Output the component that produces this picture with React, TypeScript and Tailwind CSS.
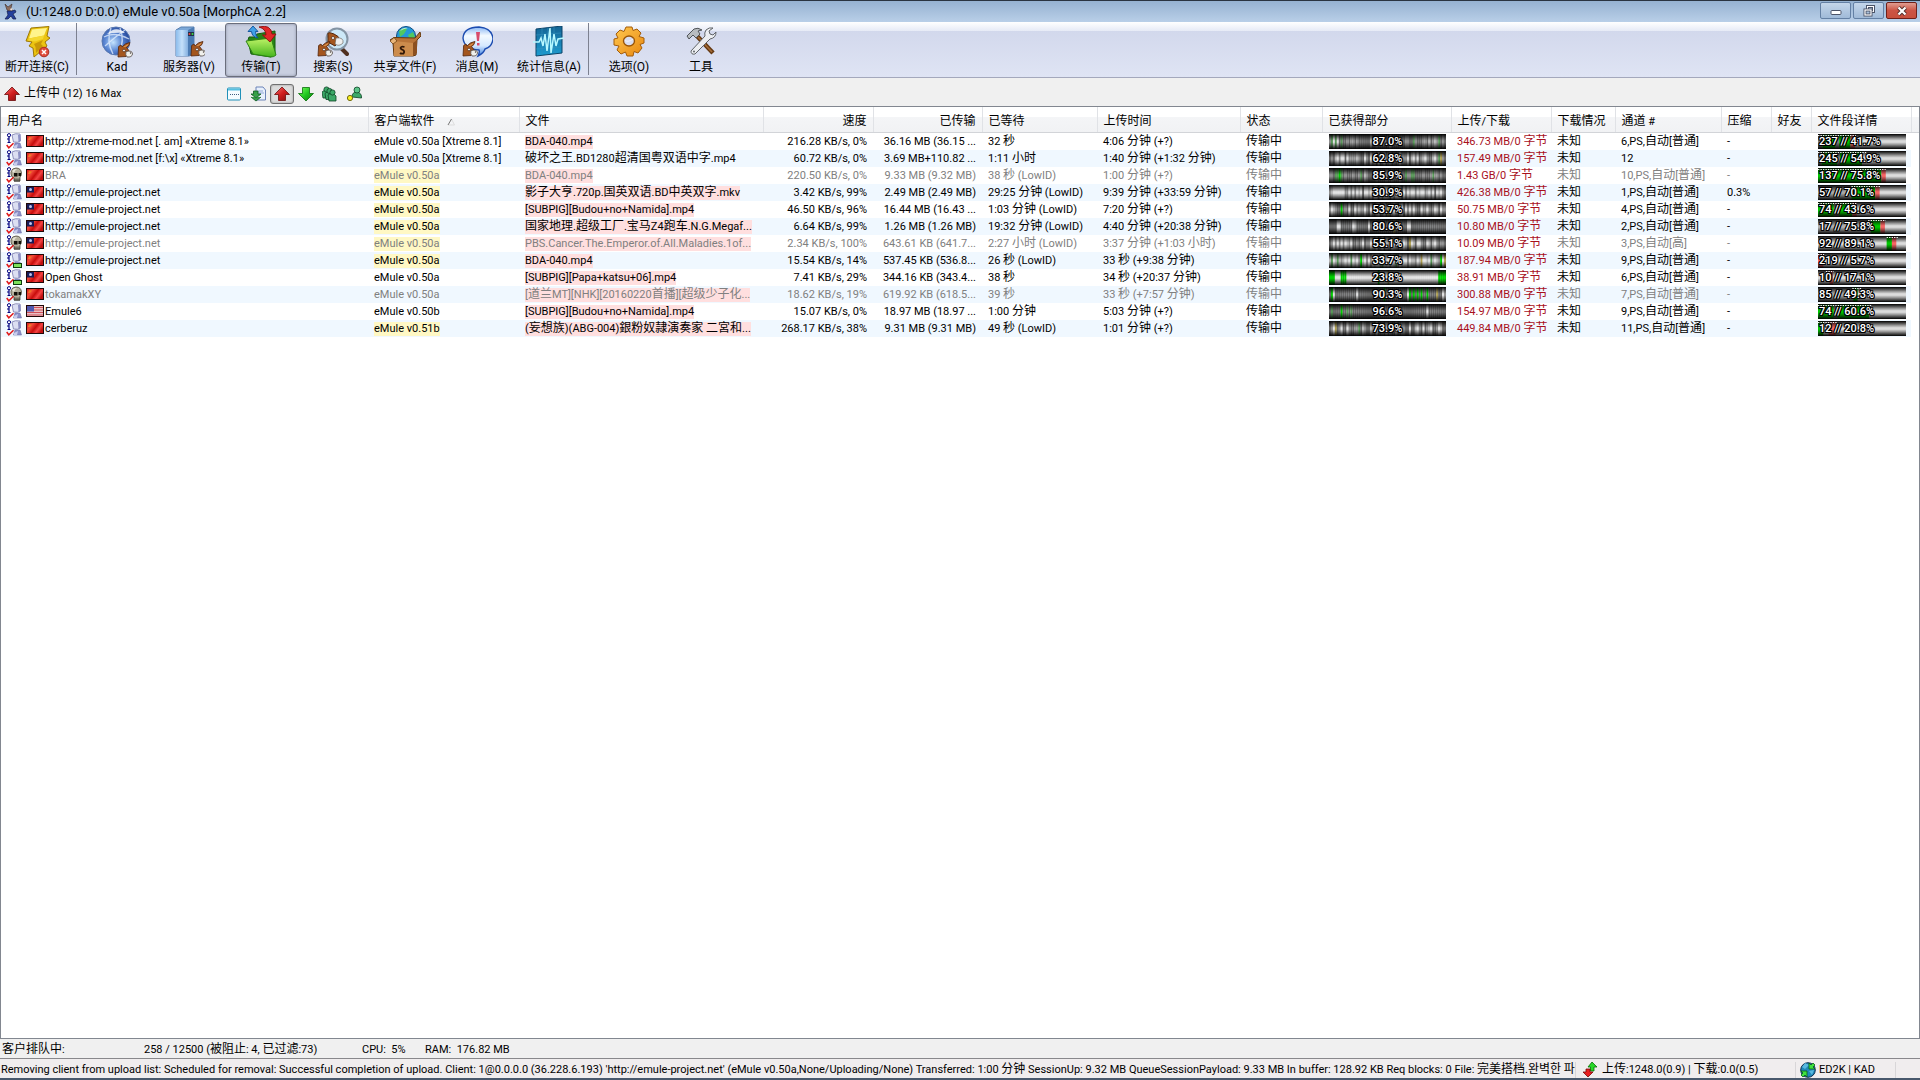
import type { ReactNode } from 'react';
import clsx from 'clsx';

type Client = {
  name: string;
  flag: 'cn' | 'tw' | 'us';
  icon: 'friend' | 'skull' | 'green';
  soft: string;
  softMark?: boolean;
  file: string;
  fileMark?: boolean;
  speed: string;
  sent: string;
  waited: string;
  upTime: string;
  parts: string;
  percent: string;
  total: string;
  slot: string;
  zip: string;
  chunk: string;
  // [start, end, colour] in percent of the bar
  bands: [number, number, string][];
  dots: [number, number];
  dim?: boolean;
};

const GREEN = '#00c800';
const RED = '#f86464';
const SHADE = '#808080';

const clients: Client[] = [
  {
    name: 'http://xtreme-mod.net [. am] «Xtreme 8.1»', flag: 'cn', icon: 'friend',
    soft: 'eMule v0.50a [Xtreme 8.1]', file: 'BDA-040.mp4', fileMark: true,
    speed: '216.28 KB/s, 0%', sent: '36.16 MB (36.15 ...', waited: '32 秒', upTime: '4:06 分钟 (+?)',
    parts: 'mgwgwdgddmdmmdmddddddlddmddddkdldddddddmmddgmdddmmdldmlmgdmd', percent: '87.0%',
    total: '346.73 MB/0 字节', slot: '6,PS,自动[普通]', zip: '-', chunk: '237 // 41.7%',
    bands: [[0, 5, SHADE], [5, 20, GREEN], [20, 24, SHADE], [24, 37, GREEN], [37, 42, RED]], dots: [0, 43],
  },
  {
    name: 'http://xtreme-mod.net [f:\\x] «Xtreme 8.1»', flag: 'cn', icon: 'friend',
    soft: 'eMule v0.50a [Xtreme 8.1]', file: '破坏之王.BD1280超清国粤双语中字.mp4',
    speed: '60.72 KB/s, 0%', sent: '3.69 MB+110.82 ...', waited: '1:11 小时', upTime: '1:40 分钟 (+1:32 分钟)',
    parts: 'dmdlwmwwdwmmmmlmddwmdwmldwdmwdmldmdmwmmmwdlwmwdmlwmddlwmgymd', percent: '62.8%',
    total: '157.49 MB/0 字节', slot: '12', zip: '-', chunk: '245 // 54.9%',
    bands: [[0, 4, SHADE], [4, 22, GREEN], [22, 25, SHADE], [25, 50, GREEN]], dots: [0, 55],
  },
  {
    name: 'BRA', flag: 'cn', icon: 'skull', soft: 'eMule v0.50a', softMark: true, file: 'BDA-040.mp4', fileMark: true,
    speed: '220.50 KB/s, 0%', sent: '9.33 MB (9.32 MB)', waited: '38 秒 (LowID)', upTime: '1:00 分钟 (+?)',
    parts: 'mmdggGgdmdddmddmgdlmddddmddddmddmdddmddgmmggddddmdddmgmmdmdd', percent: '85.9%',
    total: '1.43 GB/0 字节', slot: '10,PS,自动[普通]', zip: '-', chunk: '137 // 75.8%',
    bands: [[0, 72, GREEN], [72, 77, RED]], dots: [0, 77], dim: true,
  },
  {
    name: 'http://emule-project.net', flag: 'tw', icon: 'friend', soft: 'eMule v0.50a', softMark: true,
    file: '影子大亨.720p.国英双语.BD中英双字.mkv', fileMark: true,
    speed: '3.42 KB/s, 99%', sent: '2.49 MB (2.49 MB)', waited: '29:25 分钟 (LowID)', upTime: '9:39 分钟 (+33:59 分钟)',
    parts: 'mlwwwwwwmmwmwmwlwdwwlwmwwdwmwwldwmwwldwmwlwwmwlwwmlwmwdwlwmd', percent: '30.9%',
    total: '426.38 MB/0 字节', slot: '1,PS,自动[普通]', zip: '0.3%', chunk: '57 // 70.1%',
    bands: [[0, 38, '#a8a8a8'], [38, 65, GREEN], [65, 70, RED]], dots: [38, 71],
  },
  {
    name: 'http://emule-project.net', flag: 'tw', icon: 'friend', soft: 'eMule v0.50a', softMark: true,
    file: '[SUBPIG][Budou+no+Namida].mp4', fileMark: true,
    speed: '46.50 KB/s, 96%', sent: '16.44 MB (16.43 ...', waited: '1:03 分钟 (LowID)', upTime: '7:20 分钟 (+?)',
    parts: 'mwlmddGdmdwddwmlmmwmdwmdlwdmwdydlwmdlwdwmwmwmddwmmwmdmwldwmm', percent: '53.7%',
    total: '50.75 MB/0 字节', slot: '4,PS,自动[普通]', zip: '-', chunk: '74 // 43.6%',
    bands: [[0, 18, GREEN], [18, 24, SHADE], [24, 39, GREEN], [39, 44, RED]], dots: [0, 44],
  },
  {
    name: 'http://emule-project.net', flag: 'tw', icon: 'friend', soft: 'eMule v0.50a', softMark: true,
    file: '国家地理.超级工厂.宝马Z4跑车.N.G.Megaf...', fileMark: true,
    speed: '6.64 KB/s, 99%', sent: '1.26 MB (1.26 MB)', waited: '19:32 分钟 (LowID)', upTime: '4:40 分钟 (+20:38 分钟)',
    parts: 'ddddwwddddddwlddddddwddddddddddddyddddddwwdddddddddddddddddd', percent: '80.6%',
    total: '10.80 MB/0 字节', slot: '2,PS,自动[普通]', zip: '-', chunk: '17 // 75.8%',
    bands: [[0, 60, '#b0b0b0'], [60, 71, GREEN], [71, 76, RED]], dots: [57, 77],
  },
  {
    name: 'http://emule-project.net', flag: 'tw', icon: 'skull', soft: 'eMule v0.50a', softMark: true,
    file: 'PBS.Cancer.The.Emperor.of.All.Maladies.1of...', fileMark: true,
    speed: '2.34 KB/s, 100%', sent: '643.61 KB (641.7...', waited: '2:27 小时 (LowID)', upTime: '3:37 分钟 (+1:03 小时)',
    parts: 'dmwmwmwmwlmwddmdmwdmmwlmwdmwdlmdwlmdmmwldywldwwmddwldlwmdmmd', percent: '55.1%',
    total: '10.09 MB/0 字节', slot: '3,PS,自动[高]', zip: '-', chunk: '92 // 89.1%',
    bands: [[78, 84, GREEN], [84, 89, RED]], dots: [78, 91], dim: true,
  },
  {
    name: 'http://emule-project.net', flag: 'cn', icon: 'green', soft: 'eMule v0.50a', softMark: true,
    file: 'BDA-040.mp4', fileMark: true,
    speed: '15.54 KB/s, 14%', sent: '537.45 KB (536.8...', waited: '26 秒 (LowID)', upTime: '33 秒 (+9:38 分钟)',
    parts: 'lgwlglmlwlwgwlwmGlwmwmwlwwmgwlwmwlgmwlwwmwllmwlywwlwglwlmGwy', percent: '33.7%',
    total: '187.94 MB/0 字节', slot: '9,PS,自动[普通]', zip: '-', chunk: '219 // 5.7%',
    bands: [[0, 6, RED]], dots: [0, 7],
  },
  {
    name: 'Open Ghost', flag: 'tw', icon: 'green', soft: 'eMule v0.50a',
    file: '[SUBPIG][Papa+katsu+06].mp4', fileMark: true,
    speed: '7.41 KB/s, 29%', sent: '344.16 KB (343.4...', waited: '38 秒', upTime: '34 秒 (+20:37 分钟)',
    parts: 'GGGwwwGGGwwwwwwwwwwwwwwwwGwwwwywwwwwwwwwwwwwwwwwwwwwwwwwGGGG', percent: '23.8%',
    total: '38.91 MB/0 字节', slot: '6,PS,自动[普通]', zip: '-', chunk: '10 // 17.1%',
    bands: [[13, 17, RED]], dots: [9, 18],
  },
  {
    name: 'tokamakXY', flag: 'cn', icon: 'skull', soft: 'eMule v0.50a',
    file: '[道兰MT][NHK][20160220首播][超级少子化...', fileMark: true,
    speed: '18.62 KB/s, 19%', sent: '619.92 KB (618.5...', waited: '39 秒', upTime: '33 秒 (+7:57 分钟)',
    parts: 'dGwdddddddddddwdddddddddddddGdddddddddddwGdGdGdGddGddddyddwm', percent: '90.3%',
    total: '300.88 MB/0 字节', slot: '7,PS,自动[普通]', zip: '-', chunk: '85 // 49.3%',
    bands: [[0, 40, '#a8a8a8'], [40, 45, GREEN]], dots: [39, 50], dim: true,
  },
  {
    name: 'Emule6', flag: 'us', icon: 'friend', soft: 'eMule v0.50b',
    file: '[SUBPIG][Budou+no+Namida].mp4', fileMark: true,
    speed: '15.07 KB/s, 0%', sent: '18.97 MB (18.97 ...', waited: '1:00 分钟', upTime: '5:03 分钟 (+?)',
    parts: 'dgddddGddgdgddddddddddddddddddddddddddddddddddddddwddddddddd', percent: '96.6%',
    total: '154.97 MB/0 字节', slot: '9,PS,自动[普通]', zip: '-', chunk: '74 // 60.6%',
    bands: [[0, 18, GREEN], [18, 22, SHADE], [22, 58, GREEN]], dots: [0, 61],
  },
  {
    name: 'cerberuz', flag: 'cn', icon: 'friend', soft: 'eMule v0.51b', softMark: true,
    file: '(妄想族)(ABG-004)銀粉奴隷演奏家 二宮和...', fileMark: true,
    speed: '268.17 KB/s, 38%', sent: '9.31 MB (9.31 MB)', waited: '49 秒 (LowID)', upTime: '1:01 分钟 (+?)',
    parts: 'dmwydmwddwmddmmgdlmddlmdwddmdldmddlddmmddwddlwmdwdmlwddmwldd', percent: '73.9%',
    total: '449.84 MB/0 字节', slot: '11,PS,自动[普通]', zip: '-', chunk: '12 // 20.8%',
    bands: [[0, 6, GREEN], [12, 20, RED]], dots: [0, 22],
  },
];

const tones: Record<string, string> = {
  k: '#484848', d: '#686868', m: '#909090', l: '#b8b8b8', w: '#e2e2e2', g: '#5a9a5a', G: '#00d000', y: '#b0a050',
};

const columns: { label: string; width: string; right?: boolean }[] = [
  { label: '用户名', width: 'w-[367px]' },
  { label: '客户端软件', width: 'w-[151px]' },
  { label: '文件', width: 'w-[244px]' },
  { label: '速度', width: 'w-[110px]', right: true },
  { label: '已传输', width: 'w-[109px]', right: true },
  { label: '已等待', width: 'w-[115px]' },
  { label: '上传时间', width: 'w-[143px]' },
  { label: '状态', width: 'w-[82px]' },
  { label: '已获得部分', width: 'w-[129px]' },
  { label: '上传/下载', width: 'w-[100px]' },
  { label: '下载情况', width: 'w-[64px]' },
  { label: '通道 #', width: 'w-[106px]' },
  { label: '压缩', width: 'w-[50px]' },
  { label: '好友', width: 'w-[40px]' },
  { label: '文件段详情', width: 'w-[100px]' },
];

// Ideographs are set one pixel larger than the latin text around them
function Mixed({ text }: { text: string }) {
  const pieces = text.split(/([\u3000-\u30ff\u4e00-\u9fff\uac00-\ud7af]+)/);
  return (
    <span>
      {pieces.map((piece, i) => (i % 2 ? <span key={i} className="text-xs leading-none">{piece}</span> : piece))}
    </span>
  );
}

const outline = 'font-medium [text-shadow:1px_0_#000,-1px_0_#000,0_1px_#000,0_-1px_#000,1px_1px_#000,-1px_-1px_#000,1px_-1px_#000,-1px_1px_#000]';
const tube = 'bg-[linear-gradient(#000_0,rgba(0,0,0,.3)_30%,transparent_45%,transparent_55%,rgba(0,0,0,.3)_70%,#000_100%)]';

function PartsBar({ parts, percent }: { parts: string; percent: string }) {
  return (
    <div className="relative h-[15px]">
      <svg className="block w-full h-full" viewBox={`0 0 ${parts.length} 1`} preserveAspectRatio="none">
        {parts.split('').map((c, i) => (
          <rect key={i} x={i} y="0" width="1.05" height="1" fill={tones[c]} />
        ))}
      </svg>
      <div className={clsx('absolute inset-0 text-center leading-[15px] text-white', tube)}>
        <span className={outline}>{percent}</span>
      </div>
    </div>
  );
}

function ChunkBar({ chunk, bands, dots }: { chunk: string; bands: Client['bands']; dots: [number, number] }) {
  return (
    <div className="relative h-[15px]">
      <svg className="block w-full h-full" viewBox="0 0 100 15" preserveAspectRatio="none">
        <rect width="100" height="15" fill="#dcdcdc" />
        {bands.map(([from, to, fill]) => (
          <rect key={from} x={from} width={to - from} height="15" fill={fill} />
        ))}
      </svg>
      <div className={clsx('absolute inset-0 text-white', tube)}>
        <svg className="absolute inset-0 w-full h-full" viewBox="0 0 100 15" preserveAspectRatio="none">
          <path d={`M${dots[0]} 1.5H${dots[1]}`} stroke="#fff" strokeDasharray="1.6 1.2" />
        </svg>
        <span className={clsx('relative block pl-px leading-[15px]', outline)}>{chunk}</span>
      </div>
    </div>
  );
}

function ClientIcon({ kind }: { kind: Client['icon'] }) {
  return (
    <svg className="w-4 h-4 shrink-0" viewBox="0 0 16 16">
      {kind === 'skull' ? (
        <>
          <path d="M5 5Q6 1 10 1Q15 1 15.500 6Q15.500 9 14 10V14H8V11Q5 10 5 7Z" fill="#b4b09c" stroke="#4c483c" strokeWidth=".8" />
          <path d="M6 4Q8 1.500 11 2Q9 3 8 6Z" fill="#e8e6d8" />
          <path d="M8 6H11.500V9.500H8ZM12.500 6H15V9H12.500Z" fill="#14120c" />
          <path d="M9 11.500V15M11 11.500V15M13 11.500V15" stroke="#28261e" strokeWidth=".9" />
        </>
      ) : (
        <>
          <path d="M6 2Q9 0 14 1L14.500 8Q12 10 7.500 9Z" fill="#dcdff2" stroke="#8486b4" strokeWidth=".9" />
          <path d="M12 2L14.500 1.500V8L12.500 9Z" fill="#8c90c4" />
          <path d="M9 10H14L15.500 15H7.500Z" fill="#8c90c8" stroke="#7074a8" strokeWidth=".6" />
          <path d="M8 13L12 11L11 15H8Z" fill="#c8ccec" />
        </>
      )}
      <circle cx="3" cy="2.200" r="1.600" fill="#fff" stroke="#000080" />
      <path d="M3 4V10M1 6H3M1.500 9.500H4.500" stroke="#000080" strokeWidth="1.200" fill="none" />
      <path d="M.7 12L2.800 14.800L7.500 10.300" stroke="#e01818" strokeWidth="1.500" fill="none" />
      {kind === 'green' && <rect x="7.500" y="11.500" width="8" height="4" fill="#7ce05a" stroke="#0c3c0c" />}
    </svg>
  );
}

function Flag({ country }: { country: Client['flag'] }) {
  return (
    <svg className="ml-1 mr-px w-[18px] h-3 shrink-0" viewBox="0 0 18 12">
      <defs>
        <linearGradient id={`wave-${country}`} x1="0" y1="0" x2="1" y2=".5">
          <stop offset="0" stopColor="#d81818" />
          <stop offset=".35" stopColor="#f04838" />
          <stop offset=".6" stopColor="#c80c0c" />
          <stop offset=".8" stopColor="#f44444" />
          <stop offset="1" stopColor="#c01010" />
        </linearGradient>
      </defs>
      <rect x=".5" y=".5" width="17" height="11" fill={country === 'us' ? '#e8c0c4' : `url(#wave-${country})`} stroke="#200808" />
      {country === 'cn' && <path d="M2 5L3 2L6 2.500L4 5Z" fill="#f07828" />}
      {country === 'tw' && (
        <>
          <path d="M1 1H8V6.500H1Z" fill="#181c58" />
          <circle cx="4.500" cy="3.500" r="1.500" fill="#c0c4ec" />
        </>
      )}
      {country === 'us' && (
        <>
          <path d="M1 2.500H17M1 5H17M1 7.500H17M1 10H17" stroke="#d05058" />
          <path d="M1 1H8V6.500H1Z" fill="#5058b0" />
        </>
      )}
    </svg>
  );
}

function ArrowIcon({ up, className }: { up?: boolean; className?: string }) {
  return (
    <svg className={clsx('w-4 h-4', className)} viewBox="0 0 16 16">
      <defs>
        <linearGradient id={up ? 'arrow-up' : 'arrow-down'} x1="0" y1="0" x2="1" y2="1">
          <stop offset="0" stopColor={up ? '#f47070' : '#80ff60'} />
          <stop offset=".5" stopColor={up ? '#d01c1c' : '#20c820'} />
          <stop offset="1" stopColor={up ? '#800c0c' : '#087808'} />
        </linearGradient>
      </defs>
      {up ? (
        <path d="M8 1L15.500 8.500H11.500V14.500H4.500V8.500H.5Z" fill="url(#arrow-up)" stroke="#6e0a0a" strokeWidth=".8" />
      ) : (
        <path d="M8 15L15.500 7.500H11.500V1.500H4.500V7.500H.5Z" fill="url(#arrow-down)" stroke="#0a6e0a" strokeWidth=".8" />
      )}
    </svg>
  );
}

// Donkey head, about 15 units wide, drawn from its own origin
function Donkey({ x, y }: { x: number; y: number }) {
  return (
    <g transform={`translate(${x} ${y})`}>
      <path d="M1 15L1.500 7Q.5 4 4 3L5 5Q8 1 13 .5Q12.500 4 9.500 5.500Q11 7 12 9L9 14.500Z" fill="#a4561e" stroke="#54260c" strokeWidth=".8" />
      <path d="M6 5L12 1.500Q11 4 8 5Z" fill="#e09850" />
      <path d="M9 9.500Q15.500 8 15.500 12Q15 15.500 10 15Q8 13 9 9.500Z" fill="#f0f0ec" stroke="#504844" strokeWidth=".8" />
      <circle cx="7" cy="8.500" r="1.300" fill="#fff" stroke="#301408" strokeWidth=".6" />
      <circle cx="13.500" cy="11" r=".7" fill="#403838" />
    </g>
  );
}

const icons: Record<string, ReactNode> = {
  disconnect: (
    <>
      <path d="M10 2L28 .5L26 10L29 12L24 16L26 20L13 31L12 22L8 20L11 16L5 15Z" fill="#ecc410" stroke="#9c7808" />
      <path d="M11 3.500L26 2L23 9.500L8 12.500Z" fill="#fff48c" />
      <path d="M8 12.500L23 9.500L22 13L14 15.500L7 14.500Z" fill="#f4d830" />
      <path d="M13 18L22 14L20 18L22 20L15 27L14.500 21Z" fill="#c89808" />
      <circle cx="23" cy="26" r="4.800" fill="#e04c3c" stroke="#a82c20" />
      <path d="M21 24L25 28M25 24L21 28" stroke="#fff" strokeWidth="1.500" />
    </>
  ),
  kad: (
    <>
      <circle cx="15" cy="15" r="14" fill="url(#tb-globe)" stroke="#5878b0" />
      <path d="M3 11Q13 5 28 13M4 20Q14 11 24 4M10 2Q5 15 12 28M19 2Q24 14 18 28" stroke="#e4f0ff" strokeWidth="1.400" fill="none" opacity=".75" />
      <path d="M6 8Q15 -1 24 7Q15 6 6 8Z" fill="#fff" opacity=".8" />
      <Donkey x={16} y={16} />
    </>
  ),
  server: (
    <>
      <path d="M3 4L8 1H21V28L16 30H3Z" fill="#7ca8d8" stroke="#5880b0" />
      <path d="M3 4H15V30H3Z" fill="url(#tb-case)" />
      <path d="M15 4L21 1V28L15 30Z" fill="#4c7cb4" />
      <rect x="15" y="6" width="6" height="4" fill="#203048" />
      <circle cx="16.500" cy="8" r="1" fill="#f04040" />
      <circle cx="19.500" cy="8" r="1" fill="#40e040" />
      <Donkey x={17} y={15} />
    </>
  ),
  transfer: (
    <>
      <path d="M3 14L4 11L10 11L12 8L30 5V27L26 31L6 28Z" fill="#288418" stroke="#145c0c" />
      <path d="M1 15L26 12L31 29Q29 31 26 31L8 28Z" fill="url(#tb-folder)" stroke="#2c8414" />
      <path d="M8 0L13 5.500H10.500Q10.500 10 13 12Q7 11 6.500 5.500H3Z" fill="#40a0e8" stroke="#0c5098" strokeWidth=".9" />
      <path d="M14 1Q26 -2 27 8H31L25 16L17.500 9H21Q21 3 14 1Z" fill="#e02828" stroke="#8c0c0c" strokeWidth=".9" />
    </>
  ),
  search: (
    <>
      <path d="M22 20L30 28" stroke="#503020" strokeWidth="4" strokeLinecap="round" />
      <circle cx="20" cy="13" r="10.500" fill="#cce8f8" stroke="#8494a4" strokeWidth="2" />
      <path d="M11 16L11 9Q10 6 14 7L17 8Q22 10 23 14L18 20Z" fill="#a4561e" stroke="#54260c" />
      <path d="M19 12Q27 11 26 17Q22 21 18 18Z" fill="#eee" stroke="#605850" strokeWidth=".6" />
      <circle cx="16" cy="12" r="1.500" fill="#fff" stroke="#301408" strokeWidth=".6" />
      <Donkey x={0} y={15} />
    </>
  ),
  shared: (
    <>
      <circle cx="17" cy="10" r="9.500" fill="#2498d8" stroke="#104c80" />
      <path d="M10 5Q14 1 18 3L15 8L11 11ZM19 9L24 6L26 11L21 14Z" fill="#50c860" />
      <path d="M11 5Q14 1 19 2Q14 3 11 5Z" fill="#fff" opacity=".7" />
      <path d="M1 14L5 11.500L26 12L31 6L32 10L28 14L27 29L24 30H5L4 17Z" fill="#b87438" stroke="#64380c" />
      <path d="M5 15L24 17V30H5Z" fill="#cc8c4c" />
      <path d="M24 17L28 14V27L24 30Z" fill="#8c5020" />
      <path d="M1 15L5 11.500L8 15L4 18Z" fill="#e8b478" stroke="#64380c" strokeWidth=".7" />
      <path d="M15.500 21Q12 20 11.500 22Q12 23.500 14 24Q16 25.500 14.500 27.500Q12 28 11 27" stroke="#301808" strokeWidth="1.800" fill="none" />
    </>
  ),
  messages: (
    <>
      <path d="M18 1Q31 2 32 13Q31 21 24 23Q23 27 17 30Q19 26 18 24Q3 23 2 12Q3 1 18 1Z" fill="url(#tb-bubble)" stroke="#1c4cb0" strokeWidth="1.400" />
      <path d="M15 6H19L18 15H16ZM16 17H18.500V19.500H16Z" fill="#d84c6c" />
      <Donkey x={1} y={15} />
    </>
  ),
  stats: (
    <>
      <path d="M3 3L29 0V27L3 30Z" fill="url(#tb-stats)" stroke="#0c4468" />
      <path d="M9 2V29M15 1.500V28M21 1V27M3 9L28 7M3 16L28 14M3 23L28 21" stroke="#3890bc" strokeWidth=".6" />
      <path d="M0 16H6L8 12L10 20L12 8L14 25L17 2L18 27L21 8L23 20L25 13L31 12" stroke="#b8f8ff" strokeWidth="1.500" fill="none" />
    </>
  ),
  options: (
    <>
      <path
        d="M13 1L19 1L20 4.500L24 3L28 7L26 10.500L31 12V17L27 18.500L29 22L25 27L21 25.500L20 30H14L12.500 26L8 28L4 24L6 20L1 19V13L5 12L3 8L7 4L11 5.500Z"
        fill="url(#tb-gear)"
        stroke="#a45c08"
        strokeLinejoin="round"
      />
      <ellipse cx="16" cy="15" rx="5.500" ry="5" fill="#d8ddf0" stroke="#985408" strokeWidth="1.400" />
      <path d="M11.500 14Q14 17 20.500 13" stroke="#fff" fill="none" opacity=".6" />
    </>
  ),
  tools: (
    <>
      <path d="M12 10L28 27" stroke="#643810" strokeWidth="4.500" />
      <path d="M13 11L27 26" stroke="#a46c38" strokeWidth="1.800" />
      <path d="M2 10L9 3Q13 1 17 4L13 5L15 8L11 12L8 9L4 13Z" fill="#b8bcc0" stroke="#505458" />
      <path d="M21 4Q24 1 28 2L24 5L25 8L28 9L31 6Q31 12 25 13L10 28Q6 29 6 25L20 10Q19 7 21 4Z" fill="#eceef2" stroke="#606468" />
      <circle cx="9" cy="25.500" r="1" fill="#606468" />
    </>
  ),
};

function ToolButton({ icon, label, active }: { icon: string; label: string; active?: boolean }) {
  return (
    <button
      className={clsx(
        'w-[72px] h-[54px] shrink-0 flex flex-col items-center pt-0.5 rounded-[3px] border text-xs leading-4 whitespace-nowrap',
        active ? 'border-[#6a6e7c] bg-[#c9cfe0] shadow-[inset_0_0_3px_#8a90a4]' : 'border-transparent',
      )}
    >
      <svg className="w-8 h-8 mb-px" viewBox="0 0 32 32">{icons[icon]}</svg>
      {label}
    </button>
  );
}

function Divider() {
  return <div className="ml-[3px] mr-1 w-px h-[52px] bg-[#7d8190]" />;
}

function SmallButton({ label, active, children }: { label: string; active?: boolean; children: ReactNode }) {
  return (
    <button
      aria-label={label}
      className={clsx(
        'w-6 h-5 flex items-center justify-center rounded-[3px] border',
        active ? 'border-[#707070] bg-[#dcdcdc] shadow-[inset_0_0_2px_#888]' : 'border-transparent',
      )}
    >
      {children}
    </button>
  );
}

function Gradients() {
  return (
    <svg className="absolute w-0 h-0" aria-hidden="true">
      <defs>
        <radialGradient id="tb-globe" cx=".4" cy=".55" r=".6">
          <stop offset="0" stopColor="#c4e4ff" />
          <stop offset=".5" stopColor="#5c88d4" />
          <stop offset="1" stopColor="#24489c" />
        </radialGradient>
        <linearGradient id="tb-case">
          <stop offset="0" stopColor="#8cbcec" />
          <stop offset=".5" stopColor="#c4e0fa" />
          <stop offset="1" stopColor="#84b0e0" />
        </linearGradient>
        <linearGradient id="tb-folder" x1="0" y1="0" x2="0" y2="1">
          <stop offset="0" stopColor="#c0f468" />
          <stop offset="1" stopColor="#44b41c" />
        </linearGradient>
        <linearGradient id="tb-bubble" x1="0" y1="0" x2="0" y2="1">
          <stop offset="0" stopColor="#8cb8f4" />
          <stop offset=".3" stopColor="#f4faff" />
          <stop offset=".65" stopColor="#d4e8ff" />
          <stop offset="1" stopColor="#3c80e0" />
        </linearGradient>
        <linearGradient id="tb-stats" x1="0" y1="0" x2="0" y2="1">
          <stop offset="0" stopColor="#146494" />
          <stop offset="1" stopColor="#1c9cd0" />
        </linearGradient>
        <linearGradient id="tb-gear" x1="0" y1="0" x2="1" y2="1">
          <stop offset="0" stopColor="#ffc850" />
          <stop offset="1" stopColor="#e88810" />
        </linearGradient>
      </defs>
    </svg>
  );
}

function TitleBar() {
  const box = 'w-[31px] h-[17px] flex items-center justify-center border rounded-[2px]';
  return (
    <header className="h-[22px] shrink-0 flex items-center pl-1 pr-[3px] border-t border-[#2a3440] bg-linear-to-b from-[#96b2d1] to-[#b9cfe8]">
      <svg className="w-[14px] h-[17px]" viewBox="0 0 14 17">
        <path d="M1 1L4 4L8 1L7 5L9 7L6 9L3 7Z" fill="#8c6c5c" stroke="#3c2c28" strokeWidth=".6" />
        <path d="M3 8L8 8L11 7L12 9L9 11L12 16H9L7 13L4 16H1L4 12Z" fill="#24409c" stroke="#141c4c" strokeWidth=".7" />
        <path d="M7 5L9 6L8 7.500L6 7Z" fill="#e8e0dc" />
      </svg>
      <h1 className="ml-2 text-[13px] leading-5">(U:1248.0 D:0.0) eMule v0.50a [MorphCA 2.2]</h1>
      <div className="ml-auto flex gap-0.5 self-start mt-px">
        <button aria-label="最小化" className={clsx(box, 'border-[#6480a4] bg-linear-to-b from-[#c4d6ea] to-[#a0bad8]')}>
          <svg className="w-3 h-3" viewBox="0 0 12 12"><rect x="1" y="5.500" width="10" height="4" rx="1" fill="#fff" stroke="#4c5468" /></svg>
        </button>
        <button aria-label="还原" className={clsx(box, 'border-[#6480a4] bg-linear-to-b from-[#c4d6ea] to-[#a0bad8]')}>
          <svg className="w-3 h-3" viewBox="0 0 12 12">
            <rect x="4.500" y="1.500" width="6" height="5" fill="none" stroke="#4c5468" strokeWidth="3" />
            <rect x="4.500" y="1.500" width="6" height="5" fill="none" stroke="#fff" />
            <rect x="2" y="5" width="6" height="5" fill="#a8c0dc" stroke="#4c5468" strokeWidth="3" />
            <rect x="2" y="5" width="6" height="5" fill="none" stroke="#fff" strokeWidth="1.200" />
          </svg>
        </button>
        <button aria-label="关闭" className={clsx(box, 'border-[#702018] bg-linear-to-b from-[#e09c90] via-[#cc5444] to-[#c8503c]')}>
          <svg className="w-3 h-3" viewBox="0 0 12 12">
            <path d="M2.500 2.500L9.500 9.500M9.500 2.500L2.500 9.500" stroke="#54302c" strokeWidth="4" />
            <path d="M2.500 2.500L9.500 9.500M9.500 2.500L2.500 9.500" stroke="#fff" strokeWidth="2.200" />
          </svg>
        </button>
      </div>
    </header>
  );
}

function Toolbar() {
  return (
    <nav className="h-14 shrink-0 flex items-start pt-px pl-px border-b border-[#a4a8bc] bg-[linear-gradient(#fff_0,#e6eaf6_9px,#d2d8ec_9px,#dfe4f4_100%)]">
      <ToolButton icon="disconnect" label="断开连接(C)" />
      <Divider />
      <ToolButton icon="kad" label="Kad" />
      <ToolButton icon="server" label="服务器(V)" />
      <ToolButton icon="transfer" label="传输(T)" active />
      <ToolButton icon="search" label="搜索(S)" />
      <ToolButton icon="shared" label="共享文件(F)" />
      <ToolButton icon="messages" label="消息(M)" />
      <ToolButton icon="stats" label="统计信息(A)" />
      <Divider />
      <ToolButton icon="options" label="选项(O)" />
      <ToolButton icon="tools" label="工具" />
    </nav>
  );
}

function ViewBar() {
  return (
    <div className="h-7 shrink-0 flex items-center pl-1 pt-1">
      <div className="w-[218px] flex items-center gap-1">
        <ArrowIcon up />
        <h2 className="pt-px"><Mixed text="上传中 (12) 16 Max" /></h2>
      </div>
      <SmallButton label="分栏">
        <svg className="w-[14px] h-[14px]" viewBox="0 0 14 14">
          <rect x=".5" y="1" width="13" height="12" rx="1" fill="#f4fcff" stroke="#2090b8" />
          <path d="M1 2.500H13" stroke="#58c0e0" strokeWidth="2" />
          <path d="M3 7.500H12" stroke="#406080" strokeDasharray="1 1" />
        </svg>
      </SmallButton>
      <SmallButton label="下载与上传">
        <svg className="w-4 h-4" viewBox="0 0 16 16">
          <path d="M6 1H13L15.500 4V14H6Z" fill="#e8f0fc" stroke="#6c84b8" />
          <path d="M8 5H13M8 7H14" stroke="#90a8d8" />
          <path d="M3.500 5H8V8H11L6 12L1 8H3.500ZM1 11L6 15L11 11" fill="#38a048" stroke="#0c5820" strokeWidth=".8" />
        </svg>
      </SmallButton>
      <SmallButton label="上传中" active><ArrowIcon up /></SmallButton>
      <SmallButton label="下载中"><ArrowIcon /></SmallButton>
      <SmallButton label="排队">
        <svg className="w-4 h-4" viewBox="0 0 16 16">
          {[0, 3, 6].map((n) => (
            <g key={n} fill="#3ca868" stroke="#0c4424" strokeWidth=".8">
              <path d={`M${n} ${6 + n / 2}Q${n + 4} ${2 + n / 2} ${n + 8} ${7 + n / 2}V${12 + n / 2}H${n + 1}Z`} />
              <circle cx={n + 4.500} cy={3.500 + n / 2} r="2.600" />
            </g>
          ))}
        </svg>
      </SmallButton>
      <SmallButton label="已知用户">
        <svg className="w-4 h-4" viewBox="0 0 16 16">
          <path d="M6 11Q6 6 11 6Q15.500 7 15.500 11V12Z" fill="#3ca868" stroke="#0c4424" strokeWidth=".8" />
          <circle cx="11" cy="4" r="3" fill="#5cc488" stroke="#0c4424" strokeWidth=".8" />
          <circle cx="4" cy="12" r="2.600" fill="#f8f020" stroke="#706810" />
        </svg>
      </SmallButton>
    </div>
  );
}

function ClientRow({ client, striped }: { client: Client; striped: boolean }) {
  const cell = 'px-1.5 overflow-hidden';
  const barCell = 'pl-[7px] pr-[5px]';
  return (
    <tr className={clsx('h-[17px]', striped && 'bg-[#f0f8ff]', client.dim && 'text-[#808080]')}>
      <td className="pl-[5px]">
        <div className="flex items-center">
          <ClientIcon kind={client.icon} />
          <Flag country={client.flag} />
          {client.name}
        </div>
      </td>
      <td className={cell}>
        <span className={clsx('inline-block leading-[14px]', client.softMark && 'bg-[#fff8c4]')}>{client.soft}</span>
      </td>
      <td className={cell}>
        <span className={clsx('inline-block leading-[14px]', client.fileMark && 'bg-[#ffdfdf]')}>
          <Mixed text={client.file} />
        </span>
      </td>
      <td className={clsx(cell, 'text-right')}>{client.speed}</td>
      <td className={clsx(cell, 'text-right')}>{client.sent}</td>
      <td className={cell}><Mixed text={client.waited} /></td>
      <td className={cell}><Mixed text={client.upTime} /></td>
      <td className={cell}><Mixed text="传输中" /></td>
      <td className={barCell}><PartsBar parts={client.parts} percent={client.percent} /></td>
      <td className={clsx(cell, 'text-[#a8101c]')}><Mixed text={client.total} /></td>
      <td className={cell}><Mixed text="未知" /></td>
      <td className={cell}><Mixed text={client.slot} /></td>
      <td className={cell}>{client.zip}</td>
      <td className={cell} />
      <td className={barCell}><ChunkBar chunk={client.chunk} bands={client.bands} dots={client.dots} /></td>
      <td className="bg-white" />
    </tr>
  );
}

function UploadList() {
  return (
    <main className="flex-1 min-h-0 overflow-hidden bg-white border border-[#828790]">
      <table className="w-full table-fixed border-collapse leading-[17px] whitespace-nowrap">
        <thead>
          <tr className="h-[25px] bg-[linear-gradient(#fff_40%,#f4f5f7_40%,#f1f2f4_100%)]">
            {columns.map((col) => (
              <th
                key={col.label}
                className={clsx(
                  'px-1.5 pt-1 font-normal border-r border-b border-r-[#e0e2e6] border-b-[#d2d4d8]',
                  col.width,
                  col.right ? 'text-right' : 'text-left',
                )}
              >
                <Mixed text={col.label} />
                {col.label === '客户端软件' && (
                  <svg className="inline-block ml-3 w-2 h-2" viewBox="0 0 8 8">
                    <path d="M4.500 1L7.500 7H1" stroke="#ddd" fill="none" />
                    <path d="M1 7L4.500 1" stroke="#777" />
                  </svg>
                )}
              </th>
            ))}
            <th className="border-b border-[#d2d4d8]" />
          </tr>
        </thead>
        <tbody>
          {clients.map((client, i) => <ClientRow key={i} client={client} striped={i % 2 === 1} />)}
        </tbody>
      </table>
    </main>
  );
}

function QueueBar() {
  return (
    <div className="h-5 shrink-0 flex items-center pl-0.5 pt-[3px] whitespace-pre border-b border-[#88888c]">
      <div className="w-[142px]"><Mixed text="客户排队中:" /></div>
      <div className="w-[218px]"><Mixed text="258 / 12500 (被阻止: 4, 已过滤:73)" /></div>
      <div className="w-[63px]">CPU:  5%</div>
      <div>RAM:  176.82 MB</div>
    </div>
  );
}

function StatusBar() {
  return (
    <footer className="h-[21px] shrink-0 flex items-center pt-[3px] bg-[#f0edee] border-b-2 border-[#48586c] leading-4 whitespace-nowrap">
      <div className="flex-1 min-w-0 overflow-hidden pl-px">
        <Mixed text="Removing client from upload list: Scheduled for removal: Successful completion of upload. Client: 1@0.0.0.0 (36.228.6.193) 'http://emule-project.net' (eMule v0.50a,None/Uploading/None) Transferred: 1:00 分钟 SessionUp: 9.32 MB QueueSessionPayload: 9.33 MB In buffer: 128.92 KB Req blocks: 0 File: 完美搭档.완벽한 파" />
      </div>
      <div className="w-[220px] flex items-center gap-1 pl-1.5 border-l border-[#d8d6d8]">
        <svg className="w-4 h-4" viewBox="0 0 16 16">
          <path d="M10 0L15 5H12V9H8.500V5H6Z" fill="#28d828" stroke="#087008" strokeWidth=".8" />
          <path d="M6 15L1 10H4V7H8V10H11Z" fill="#e82020" stroke="#780808" strokeWidth=".8" />
        </svg>
        <Mixed text="上传:1248.0(0.9) | 下载:0.0(0.5)" />
      </div>
      <div className="w-[100px] flex items-center gap-[3px] pl-1 border-l border-[#d8d6d8]">
        <svg className="w-4 h-4" viewBox="0 0 16 16">
          <circle cx="8" cy="8" r="7.300" fill="#2088b8" stroke="#0c2c50" />
          <path d="M5 1L9 3L5 7L2 5ZM9 9L14 8L12 13Z" fill="#58b8e0" />
          <path d="M1 9H7V15L5 13L3 15L1 13L3 11Z" fill="#40e040" stroke="#086018" strokeWidth=".8" />
          <path d="M15 7H9V1L11 3L13 1L15 3L13 5Z" fill="#40e040" stroke="#086018" strokeWidth=".8" />
        </svg>
        ED2K | KAD
      </div>
      <div className="w-[25px] self-stretch border-l border-[#d8d6d8]" />
    </footer>
  );
}

export default function App() {
  return (
    <div className="h-screen flex flex-col overflow-hidden bg-[#f0f0f0] text-black text-[11px] font-[Roboto,'Noto_Sans_CJK_SC',sans-serif]">
      <Gradients />
      <TitleBar />
      <Toolbar />
      <ViewBar />
      <UploadList />
      <QueueBar />
      <StatusBar />
    </div>
  );
}
